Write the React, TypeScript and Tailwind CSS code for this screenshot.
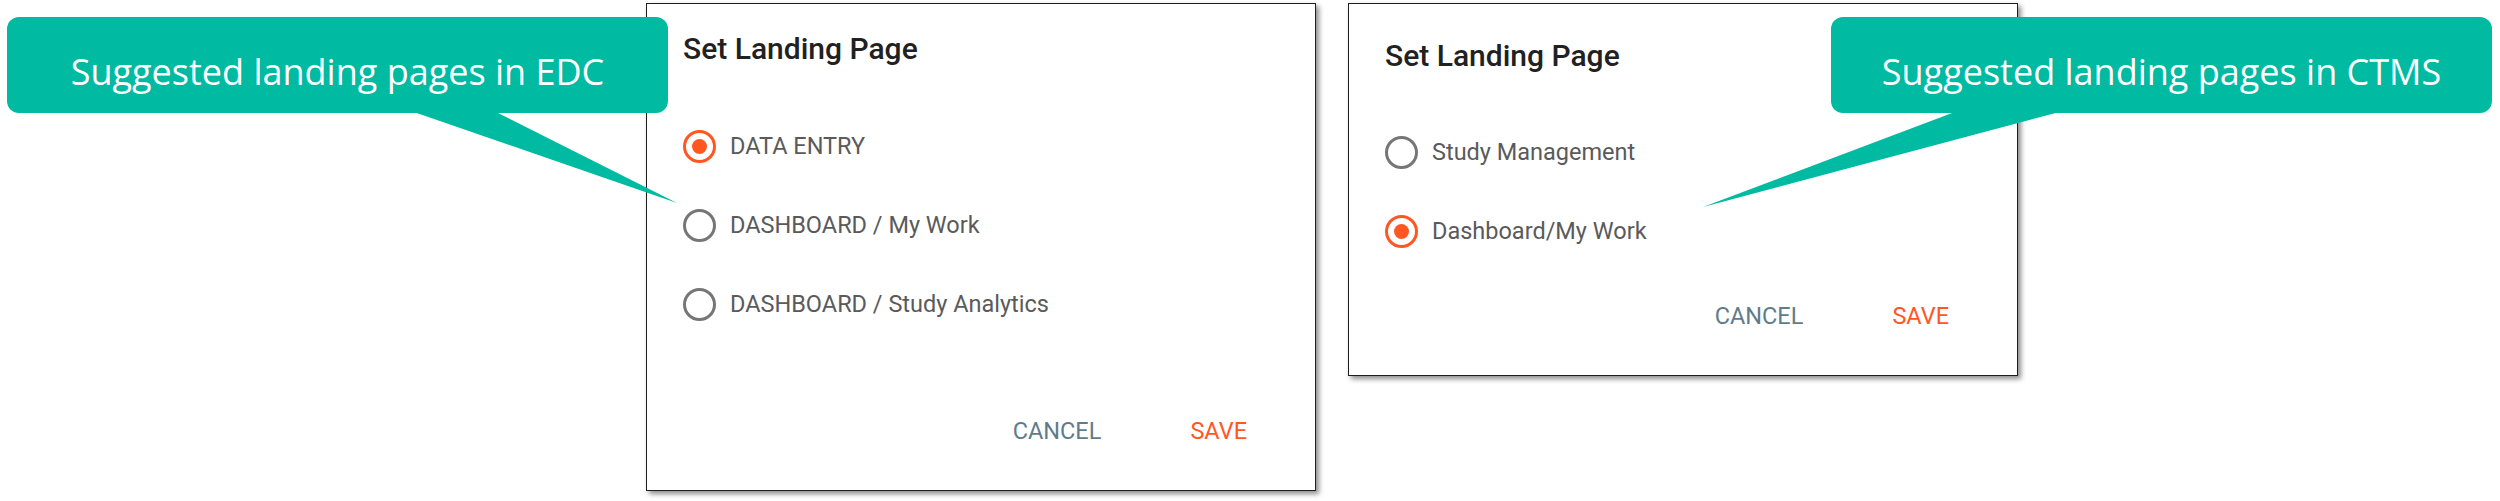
import React from "react";

type Option = { label: string; checked?: boolean };

const roboto = { fontFamily: "Roboto, 'Liberation Sans', sans-serif" };

function Radio({ checked }: { checked?: boolean }) {
  return (
    <span
      className={`flex h-[33px] w-[33px] shrink-0 items-center justify-center rounded-full border-[3px] ${
        checked ? "border-[#ff5722]" : "border-[#767676]"
      }`}
    >
      {checked && <span className="h-[15px] w-[15px] rounded-full bg-[#ff5722]" />}
    </span>
  );
}

function LandingDialog({
  options,
  height,
  titleTop,
  listTop,
  actionsTop,
}: {
  options: Option[];
  height: string;
  titleTop: string;
  listTop: string;
  actionsTop: string;
}) {
  return (
    <div
      className={`flex w-[670px] flex-col border border-[#1e1e1e] bg-white shadow-[3px_3px_5px_rgba(0,0,0,0.45)] ${height} ${titleTop}`}
      style={roboto}
    >
      <h2 className="pl-[36px] text-[30px] font-medium leading-[36px] text-[#212121]">
        Set Landing Page
      </h2>

      <div className={`flex flex-col gap-[39px] pl-[36px] ${listTop}`}>
        {options.map((o) => (
          <label key={o.label} className="flex h-[40px] items-center gap-[14px]">
            <Radio checked={o.checked} />
            <span className="text-[23.5px] leading-[28px] text-[#5a5a5a]">{o.label}</span>
          </label>
        ))}
      </div>

      <div className={`flex justify-end gap-[89px] pr-[68px] ${actionsTop}`}>
        <button className="text-[23.5px] leading-[28px] text-[#5f7c8a]">CANCEL</button>
        <button className="text-[23.5px] leading-[28px] text-[#ff5722]">SAVE</button>
      </div>
    </div>
  );
}

function Callout({ text, box }: { text: string; box: string }) {
  return (
    <div
      className={`absolute top-[17px] h-[96px] w-[661px] rounded-[12px] bg-[#00baa2] pt-[30px] text-center text-[36px] leading-[49px] text-white ${box}`}
      style={{ fontFamily: "'Open Sans', 'Noto Sans', sans-serif" }}
    >
      {text}
    </div>
  );
}

export default function App() {
  return (
    <div className="relative h-[501px] w-[2500px] overflow-hidden bg-white">
      <div className="flex items-start gap-[32px] pl-[646px] pt-[3px]">
        <LandingDialog
          height="h-[488px]"
          titleTop="pt-[27px]"
          listTop="mt-[59px]"
          actionsTop="mt-[93px]"
          options={[
            { label: "DATA ENTRY", checked: true },
            { label: "DASHBOARD / My Work" },
            { label: "DASHBOARD / Study Analytics" },
          ]}
        />
        <LandingDialog
          height="h-[373px]"
          titleTop="pt-[34px]"
          listTop="mt-[58px]"
          actionsTop="mt-[51px]"
          options={[
            { label: "Study Management" },
            { label: "Dashboard/My Work", checked: true },
          ]}
        />
      </div>

      {/* callout pointers */}
      <svg className="absolute left-0 top-0" width="2500" height="501" viewBox="0 0 2500 501">
        <polygon points="408,110 492,110 677,203" fill="#00baa2" />
        <polygon points="1960,110 2067,110 1703,207" fill="#00baa2" />
      </svg>

      <Callout box="left-[7px]" text="Suggested landing pages in EDC" />
      <Callout box="left-[1831px]" text="Suggested landing pages in CTMS" />
    </div>
  );
}
